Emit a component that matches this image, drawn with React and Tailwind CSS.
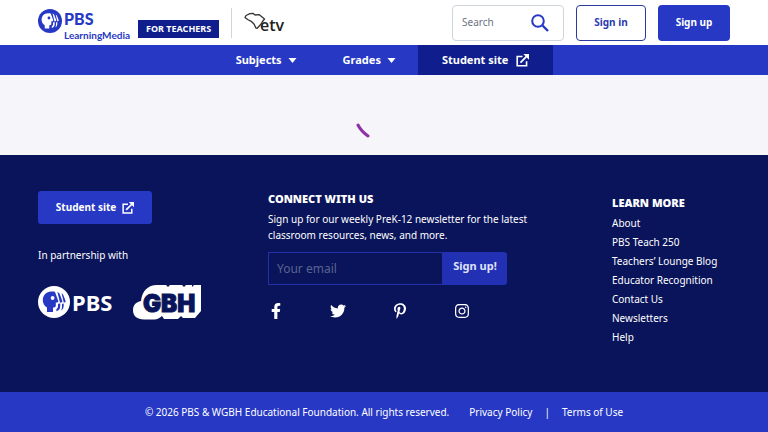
import React, { useState } from 'react';
import { FaFacebookF, FaTwitter, FaPinterestP, FaInstagram } from 'react-icons/fa';

const learnMore = [
  'About',
  'PBS Teach 250',
  'Teachers’ Lounge Blog',
  'Educator Recognition',
  'Contact Us',
  'Newsletters',
  'Help',
];

const socials = [
  { name: 'Facebook', Icon: FaFacebookF },
  { name: 'Twitter', Icon: FaTwitter },
  { name: 'Pinterest', Icon: FaPinterestP },
  { name: 'Instagram', Icon: FaInstagram },
];

// circle badge with the head profile and its two echoes
const PbsHead = ({ disc, face, className }) => (
  <svg viewBox="0 0 32 32" className={className} aria-hidden="true">
    <circle cx="16" cy="16" r="16" fill={disc} />
    <path
      d="M9 26v-4.500C6.500 20 4.800 17.300 4.800 14.200 4.800 9.300 8.500 5.600 13 5.600h2.500c1 0 1.700.6 2 1.600l2.700 7.600c.3.900-.1 1.600-1 1.600h-1.400v3.200c0 1.200-.7 1.900-1.900 1.900H15V26z"
      fill={face}
    />
    <circle cx="14.600" cy="12" r="1.900" fill={disc} />
    <path
      d="M19.400 6c1.300.4 2 1.200 2.500 2.500l2.300 6.300c.3.900-.1 1.600-1 1.600h-1v3.600c0 2.900-1.200 4.600-3.800 5.200V23c1.100-.6 1.600-1.500 1.600-3v-2.200h.9c.9 0 1.300-.7 1-1.600z"
      fill={face}
    />
    <path
      d="M23.600 7.200c1 .5 1.500 1.200 1.900 2.300l2 5.300c.3.900-.1 1.600-1 1.600h-.8v3.200c0 2.300-.8 3.900-2.500 4.800.6-1.300.8-2.500.8-4v-2.600h.7c.9 0 1.300-.7 1-1.600z"
      fill={face}
    />
  </svg>
);

const ExternalIcon = ({ className }) => (
  <svg viewBox="0 0 16 16" className={className} fill="none" aria-hidden="true">
    <path d="M8 3H1.500v11.500H13V9" stroke="currentColor" strokeWidth="2" />
    <path d="M5.500 10.500 13 3" stroke="currentColor" strokeWidth="2.200" />
    <path d="M9 0h7v7z" fill="currentColor" />
  </svg>
);

const Caret = () => (
  <svg viewBox="0 0 8 5" className="h-[5px] w-[9px]" aria-hidden="true">
    <path d="M0 0h8L4 5z" fill="currentColor" />
  </svg>
);

const EtvLogo = () => (
  <svg viewBox="0 0 42 24" className="h-6 w-[42px]" role="img" aria-label="etv">
    <path
      d="M1 6.500 2 4.500l4-1.800 3-.4 2 1.700 4-.4 5.500 4.400-2 2.500-1.800 3-3.500 3.800-1.500-.5-1.500-3.500-3-3-3.500-1.800z"
      fill="none"
      stroke="#333"
      strokeWidth="1.300"
      strokeLinejoin="round"
    />
    <text x="16" y="20" fontFamily="Open Sans, sans-serif" fontWeight="600" fontSize="16" fill="#222">
      etv
    </text>
  </svg>
);

const GbhLogo = () => (
  <svg viewBox="0 0 70 38" className="h-[38px] w-[70px]" role="img" aria-label="GBH">
    {/* extruded block behind the letters */}
    <path
      d="M1 27c0-5 3-8 8-9C10 8 16 2 25 2h9l2 2 2-2h12l2 2 2-2h6v2l2-2h7v26l-6 7H51l-2-2-3 3H32l-2-3c-3 3-6 3.500-10 3.500H12C5 36.500 1 33 1 27z"
      fill="#fff"
    />
    <text
      x="11"
      y="29"
      fontFamily="Inter, sans-serif"
      fontWeight="900"
      fontSize="24"
      fill="#0a145a"
      stroke="#0a145a"
      strokeWidth="1"
    >
      GBH
    </text>
  </svg>
);

const Header = () => {
  const [query, setQuery] = useState('');

  return (
    <header>
      <div className="flex h-[45px] items-center justify-between bg-white px-[38px]">
        <div className="flex items-center">
          <a href="#home" className="flex items-start gap-0.5 pt-1 text-[#2638c4]" aria-label="PBS LearningMedia">
            <PbsHead disc="#2638c4" face="#fff" className="h-6 w-6" />
            <span className="flex flex-col font-['Lato',sans-serif]">
              <span className="text-base leading-5 font-black">PBS</span>
              <span className="text-[10px] leading-3 font-bold">LearningMedia</span>
            </span>
          </a>
          <span className="mt-3 ml-2 bg-[#0f1e8c] px-2 text-[9px] leading-[18px] font-bold text-white">
            FOR TEACHERS
          </span>
          <span className="ml-3 h-[30px] w-px bg-gray-300" />
          <a href="#station" className="ml-3">
            <EtvLogo />
          </a>
        </div>

        <div className="flex items-center gap-3">
          <label className="flex h-9 w-28 items-center rounded border border-gray-300 pr-[14px] pl-[9px]">
            <input
              type="search"
              aria-label="Search"
              placeholder="Search"
              value={query}
              onChange={(e) => setQuery(e.target.value)}
              className="w-full min-w-0 text-[10px] outline-none placeholder:text-gray-500"
            />
            <svg viewBox="0 0 18 18" className="h-[18px] w-[18px] shrink-0" fill="none" aria-hidden="true">
              <circle cx="7" cy="7" r="5.800" stroke="#2638c4" strokeWidth="2" />
              <path d="m11.500 11.500 5.500 5.500" stroke="#2638c4" strokeWidth="2.400" />
            </svg>
          </label>
          <button className="h-9 w-[70px] rounded border border-[#2a3a9c] text-[10px] font-bold text-[#2a3ab0]">
            Sign in
          </button>
          <button className="h-9 w-[72px] rounded bg-[#2638c4] text-[10px] font-bold text-white">
            Sign up
          </button>
        </div>
      </div>

      <nav className="flex h-[30px] justify-center bg-[#2638c4] text-[11px] font-bold text-white">
        <button className="flex items-center gap-1.5 pr-6 pl-[21px]">
          Subjects <Caret />
        </button>
        <button className="flex items-center gap-1.5 px-[22px]">
          Grades <Caret />
        </button>
        <a href="#student" className="flex items-center gap-2 bg-[#0f1e8c] px-6">
          Student site <ExternalIcon className="h-[13px] w-[13px]" />
        </a>
      </nav>
    </header>
  );
};

const Footer = () => {
  const [email, setEmail] = useState('');

  return (
    <footer className="text-[10px] text-white">
      <div className="grid grid-cols-[230fr_344fr_118fr] bg-[#0a145a] px-[38px] pt-9 pb-[45px]">
        <div>
          <a
            href="#student"
            className="flex h-[33px] w-[114px] items-center justify-center gap-1.5 rounded-[3px] bg-[#2638c4] font-bold"
          >
            Student site <ExternalIcon className="h-3 w-3" />
          </a>
          <p className="mt-[23px] leading-4">In partnership with</p>
          <div className="mt-5 flex items-center gap-5">
            <a href="#pbs" className="flex items-center gap-0.5" aria-label="PBS">
              <PbsHead disc="#fff" face="#2638c4" className="h-8 w-8" />
              <span className="text-[22px] leading-8 font-bold">PBS</span>
            </a>
            <a href="#gbh">
              <GbhLogo />
            </a>
          </div>
        </div>

        <div>
          <h2 className="text-[11px] leading-4 font-black">CONNECT WITH US</h2>
          <p className="mt-1 w-[264px] leading-4">
            Sign up for our weekly PreK-12 newsletter for the latest classroom resources, news, and more.
          </p>
          <form className="mt-[9px] flex h-[33px]" onSubmit={(e) => e.preventDefault()}>
            <input
              type="email"
              aria-label="Your email"
              placeholder="Your email"
              value={email}
              onChange={(e) => setEmail(e.target.value)}
              className="w-[175px] border border-[#2430a8] px-2 text-[12px] outline-none placeholder:text-[#5a6390]"
            />
            <button className="w-16 rounded-r-[3px] bg-[#2230b4] pb-1 text-[11px] font-bold text-[#dfe2fa]">
              Sign up!
            </button>
          </form>
          <div className="mt-[18px] flex gap-[46px]">
            {socials.map(({ name, Icon }) => (
              <a key={name} href="#social" aria-label={name}>
                <Icon className="h-4 w-4" />
              </a>
            ))}
          </div>
        </div>

        <div className="pt-1">
          <h2 className="text-[11px] leading-4 font-black">LEARN MORE</h2>
          <ul className="mt-[3px]">
            {learnMore.map((item) => (
              <li key={item} className="h-[19px] leading-[19px] whitespace-nowrap">
                <a href="#more">{item}</a>
              </li>
            ))}
          </ul>
        </div>
      </div>

      <div className="flex h-10 items-center justify-center bg-[#2638c4]">
        <span>© 2026 PBS &amp; WGBH Educational Foundation. All rights reserved.</span>
        <a href="#privacy" className="ml-5">
          Privacy Policy
        </a>
        <span className="mx-3">|</span>
        <a href="#terms">Terms of Use</a>
      </div>
    </footer>
  );
};

const App = () => {
  return (
    <div className="flex min-h-screen flex-col bg-[#f5f5fa] font-['Noto_Sans',sans-serif]">
      <Header />
      {/* loading spinner arc */}
      <main className="flex grow items-center justify-center pt-8">
        <svg viewBox="0 0 60 16" className="h-4 w-15" fill="none" role="img" aria-label="Loading">
          <path d="M4 2q3 6 10 11" stroke="#9030a8" strokeWidth="3" strokeLinecap="round" />
        </svg>
      </main>
      <Footer />
    </div>
  );
};

export default App;
